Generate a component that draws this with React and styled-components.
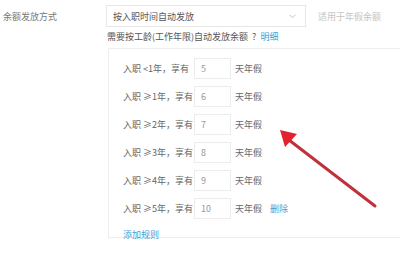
import React from 'react';
import styled, { createGlobalStyle } from 'styled-components';

const Global = createGlobalStyle`
  html, body { margin: 0; padding: 0; background: #fff; }
  body {
    width: 400px; height: 257px; overflow: hidden;
    font-family: "Noto Sans CJK SC", "Liberation Sans", sans-serif;
    font-size: 9px; color: #666;
  }
`;

const Page = styled.div`
  position: relative;
  width: 400px;
  height: 257px;
  padding-top: 5px;
  box-sizing: border-box;
  overflow: hidden;
`;

const FormRow = styled.div`
  display: grid;
  grid-template-columns: 106px auto 1fr;
  align-items: center;
`;

const Label = styled.div`
  padding-left: 3px;
  color: #777;
`;

const Select = styled.div`
  width: 200px;
  height: 22px;
  box-sizing: border-box;
  border: 1px solid #e6e6e6;
  display: flex;
  align-items: center;
  justify-content: space-between;
  padding: 0 9px 0 6px;
  color: #555;
`;

const Hint = styled.div`
  padding-left: 12px;
  color: #c4c4c4;
`;

const Body = styled.div`
  margin-left: 107px;
`;

const Note = styled.div`
  height: 19px;
  display: flex;
  align-items: center;
  color: #555;
  gap: 4px;
`;

const Link = styled.span`
  color: #3d9fd6;
`;

const Panel = styled.div`
  margin: 2px 0 0 1px;
  height: 190px;
  box-sizing: border-box;
  border: 1px solid #eee;
  border-right: none;
  padding: 9px 0 0 14px;
  display: flex;
  flex-direction: column;
  gap: 7px;
`;

const Rule = styled.div`
  display: flex;
  align-items: center;
  height: 21px;
`;

const RuleLabel = styled.span`
  width: 71px;
  color: #666;
`;

const DayInput = styled.div`
  width: 37px;
  height: 21px;
  box-sizing: border-box;
  border: 1px solid #ececec;
  display: flex;
  align-items: center;
  padding-left: 6px;
  color: #999;
`;

const Unit = styled.span`
  margin-left: 4px;
  color: #666;
`;

const Delete = styled(Link)`
  margin-left: 8px;
`;

const AddRule = styled(Link)`
  margin-top: 2px;
`;

const Arrow = styled.svg`
  position: absolute;
  left: 0;
  top: 0;
  pointer-events: none;
`;

const rules = [
  ['<1年', 5],
  ['≥1年', 6],
  ['≥2年', 7],
  ['≥3年', 8],
  ['≥4年', 9],
  ['≥5年', 10],
];

export default function App() {
  return (
    <Page>
      <Global />
      <FormRow>
        <Label>余额发放方式</Label>
        <Select>
          <span>按入职时间自动发放</span>
          <svg width="7" height="5" viewBox="0 0 7 5">
            <path d="M0.5 0.8 L3.5 3.8 L6.5 0.8" fill="none" stroke="#bbb" strokeWidth="0.9" />
          </svg>
        </Select>
        <Hint>适用于年假余额</Hint>
      </FormRow>
      <Body>
        <Note>
          <span>需要按工龄(工作年限)自动发放余额</span>
          <span>?</span>
          <Link>明细</Link>
        </Note>
        <Panel>
          {rules.map(([cond, days], i) => (
            <Rule key={cond}>
              <RuleLabel>入职 {cond}，享有</RuleLabel>
              <DayInput>{days}</DayInput>
              <Unit>天年假</Unit>
              {i === rules.length - 1 && <Delete>删除</Delete>}
            </Rule>
          ))}
          <AddRule>添加规则</AddRule>
        </Panel>
      </Body>
      <Arrow width="400" height="257" viewBox="0 0 400 257">
        <line x1="375" y1="206" x2="289" y2="140" stroke="#c0313b" strokeWidth="3" strokeLinecap="round" />
        <polygon points="280,130 297,134 285,147" fill="#e0232f" />
      </Arrow>
    </Page>
  );
}
